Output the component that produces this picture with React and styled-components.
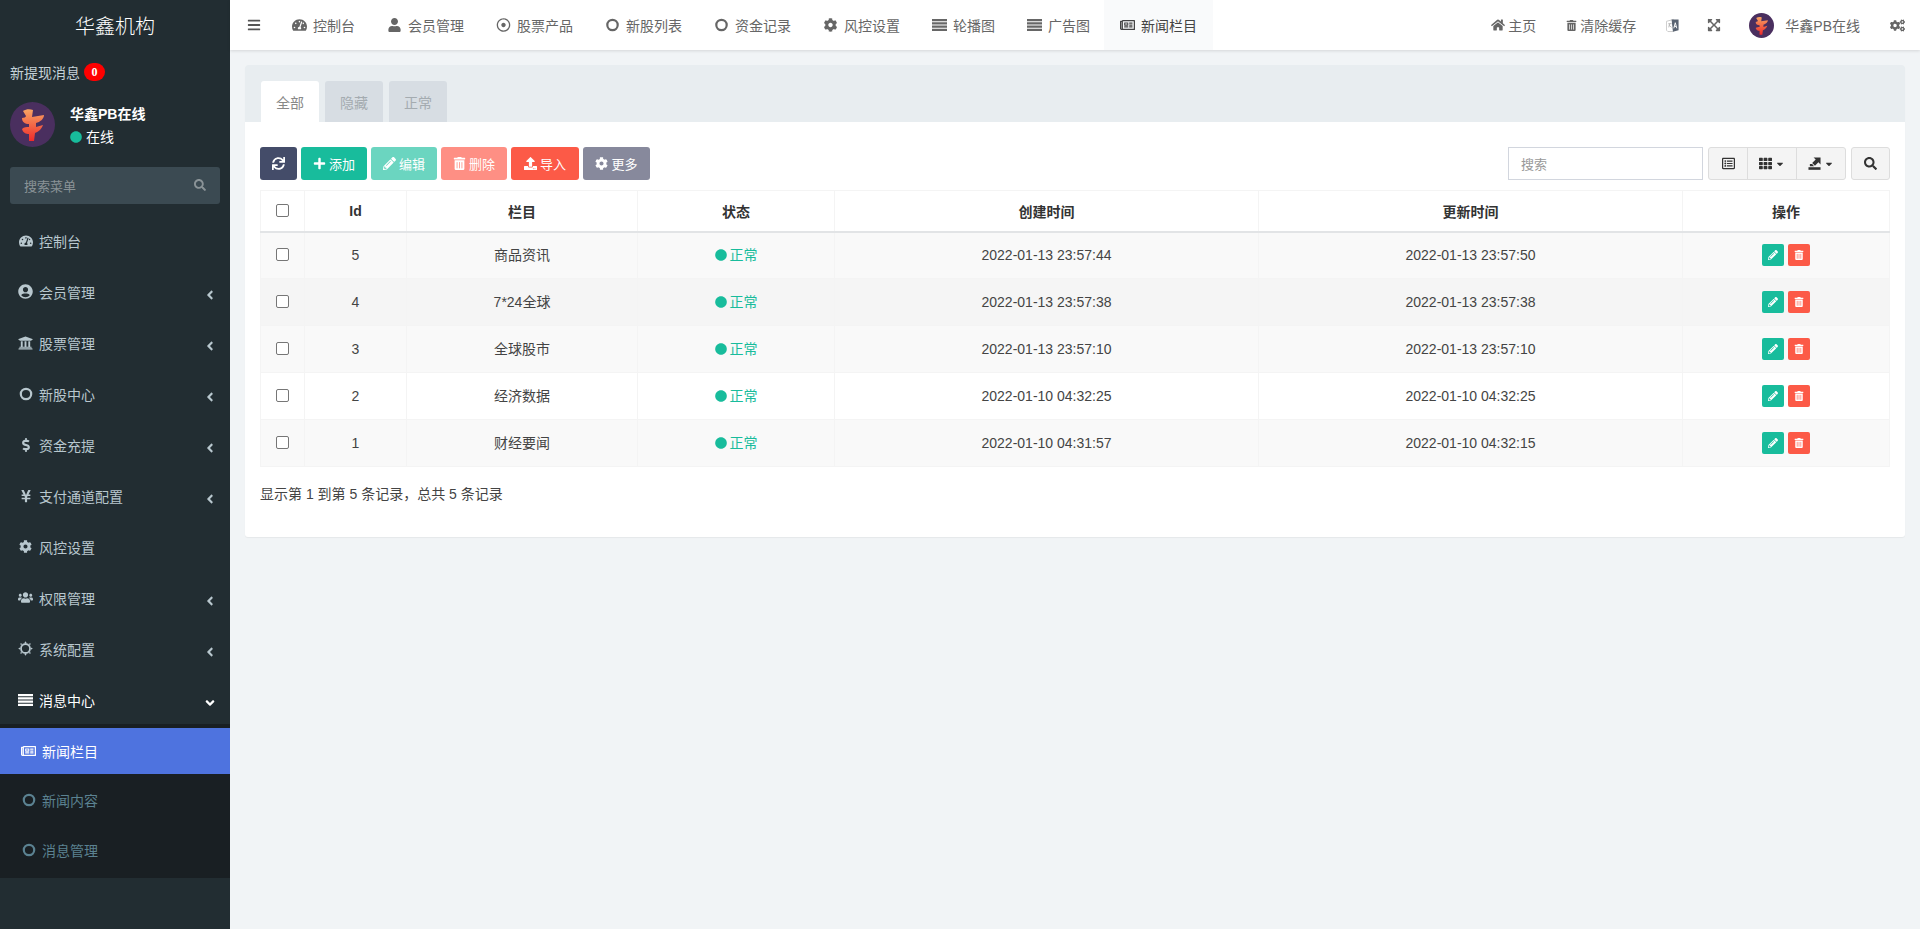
import React from 'react';
import styled, { createGlobalStyle } from 'styled-components';
import {
  FaTachometerAlt, FaUserCircle, FaUniversity, FaDollarSign, FaYenSign, FaCog, FaUsers,
  FaRegNewspaper, FaSearch, FaBars, FaUser, FaRegDotCircle, FaHome, FaTrashAlt, FaExpandArrowsAlt,
  FaCogs, FaPlus, FaPencilAlt, FaUpload, FaSync, FaTh, FaAngleLeft, FaAngleDown, FaCircle, FaRegListAlt, FaCaretDown,
} from 'react-icons/fa';

const Global = createGlobalStyle`
  html, body { margin: 0; padding: 0; height: 100%; }
  body { font-family: "Liberation Sans", "Noto Sans CJK SC", sans-serif; font-size: 14px; color: #333; background: #f1f4f6; }
  * { box-sizing: border-box; }
`;

const Shell = styled.div`display: flex; height: 929px; overflow: hidden;`;
const Side = styled.aside`width: 230px; flex: none; background: #222d32; color: #b8c7ce;`;
const Brand = styled.div`height: 50px; display: flex; align-items: center; justify-content: center; color: #fff; font-size: 20px; font-weight: 300;`;
const Notice = styled.div`height: 24px; margin-top: 10px; padding-left: 10px; display: flex; align-items: center; font-size: 14px; color: #c5d2d8;`;
const Badge = styled.span`margin-left: 4px; width: 21px; height: 18px; border-radius: 9px; background: #f00; color: #fff; font: bold 12px "Liberation Serif", serif; display: flex; align-items: center; justify-content: center;`;
const UserPanel = styled.div`display: flex; padding: 0 10px; margin-top: 18px; height: 45px;`;
const UserInfo = styled.div`margin-left: 15px; color: #fff; display: flex; flex-direction: column; padding-top: 2px;`;
const UserName = styled.div`font-weight: bold; font-size: 14px; line-height: 20px;`;
const UserState = styled.div`margin-top: 3px; font-size: 14px; line-height: 20px; display: flex; align-items: center; gap: 4px; svg { color: #18bc9c; font-size: 12px; }`;
const SearchBox = styled.div`margin: 20px 10px 0; height: 37px; background: #3b4a52; border-radius: 3px; display: flex; align-items: center; justify-content: space-between; padding: 0 14px 1px; color: #8a9397; font-size: 13px;`;
const Menu = styled.nav`margin-top: 11px;`;
const MenuItem = styled.div`
  height: 51px; display: flex; align-items: center; padding: 0 14px 0 18px; font-size: 14px;
  color: ${p => (p.$open ? '#fff' : '#b8c7ce')};
`;
const MenuIcon = styled.span`width: 15px; margin-right: 6px; display: flex; justify-content: center; font-size: ${p => p.$size || 14}px; flex: none;`;
const MenuLabel = styled.span`flex: 1;`;
const MenuArrow = styled.span`display: flex; font-size: 14px; margin-top: 6px; width: 12px; justify-content: center;`;
const SubMenu = styled.div`background: #191f23; padding: 4px 0; margin-top: -1px;`;
const SubItem = styled.div`
  height: ${p => (p.$active ? '46px' : '50px')}; display: flex; align-items: center; padding-left: 21px; font-size: 14px;
  background: ${p => (p.$active ? '#4e73df' : 'transparent')};
  color: ${p => (p.$active ? '#fff' : '#5b8291')};
  padding-top: ${p => (p.$active ? '0' : '2px')};
`;

const Main = styled.div`flex: 1; min-width: 0; display: flex; flex-direction: column;`;
const Top = styled.header`height: 50px; flex: none; background: #fff; box-shadow: 0 1px 3px rgba(0,0,0,.12); display: flex; align-items: stretch; color: #666; font-size: 14px;`;
const Burger = styled.div`width: 46px; display: flex; align-items: center; justify-content: center; font-size: 14px; color: #555; padding-right: 2px; padding-left: 4px;`;
const NavList = styled.div`display: flex; flex: 1;`;
const NavItem = styled.div`
  display: flex; align-items: center; padding: 0 16px; gap: 6px; white-space: nowrap;
  margin-left: ${p => (p.$active ? '-2px' : '0')};
  background: ${p => (p.$active ? '#f9fafb' : 'transparent')};
  color: ${p => (p.$active ? '#444' : '#666')};
  svg { flex: none; width: 15px; height: 14px; }
`;
const NavTools = styled.div`display: flex; align-items: center; padding-right: 15px;`;
const Tool = styled.div`display: flex; align-items: center; gap: 3px; margin-left: ${p => p.$gap || 30}px; svg { font-size: 14px; }`;
const ToolName = styled.span`margin-left: 8px;`;

const Content = styled.main`padding: 15px 15px 0;`;
const Panel = styled.section`background: #fff; border-radius: 3px; box-shadow: 0 1px 1px rgba(0,0,0,.05); height: 472px;`;
const Tabs = styled.div`height: 57px; background: #e8edf0; display: flex; align-items: flex-end; padding-left: 16px; gap: 6px; border-radius: 3px 3px 0 0;`;
const Tab = styled.div`
  width: 58px; height: 41px; display: flex; align-items: center; justify-content: center; font-size: 14px; border-radius: 3px 3px 0 0;
  background: ${p => (p.$active ? '#fff' : '#d7dde3')};
  color: ${p => (p.$active ? '#888' : '#a4abb0')};
`;
const Body = styled.div`padding: 25px 15px 0;`;
const Toolbar = styled.div`display: flex; justify-content: space-between; height: 33px;`;
const ButtonRow = styled.div`display: flex; gap: 4px;`;
const Btn = styled.div`
  width: ${p => p.$w}px; height: 33px; display: flex; align-items: center; justify-content: center; gap: 3px; border-radius: 3px; color: #fff; font-size: 13px;
  background: ${p => p.$bg};
  svg { font-size: 13px; }
`;
const RightTools = styled.div`display: flex;`;
const SearchInput = styled.div`width: 195px; height: 33px; border: 1px solid #d2d6de; padding-left: 12px; display: flex; align-items: center; color: #999; font-size: 13px;`;
const ToolGroup = styled.div`display: flex; margin-left: 5px; border: 1px solid #ddd; border-radius: 3px; background: #f4f4f4; color: #333;`;
const GroupCell = styled.div`
  display: flex; align-items: center; justify-content: center; gap: 3px; width: ${p => p.$w}px; font-size: 13px;
  & + & { border-left: 1px solid #ddd; }
`;
const Caret = styled(FaCaretDown)`font-size: 10px;`;
const SearchBtn = styled.div`margin-left: 5px; width: 39px; height: 33px; border: 1px solid #ddd; border-radius: 3px; background: #f4f4f4; color: #333; display: flex; align-items: center; justify-content: center; font-size: 13px;`;

const Table = styled.table`width: 1630px; margin-top: 10px; border-collapse: collapse; table-layout: fixed; font-size: 14px; border: 1px solid #f4f4f4;`;
const Th = styled.th`height: 41px; border: 1px solid #f4f4f4; border-bottom: 2px solid #e2e4e6; font-weight: bold; color: #333; text-align: center; padding: 0;`;
const Td = styled.td`height: 47px; border: 1px solid #f4f4f4; text-align: center; padding: 0; color: #444; line-height: 18px;`;
const Row = styled.tr`background: ${p => p.$bg};`;
const Check = styled.span`display: inline-block; width: 13px; height: 13px; border: 1px solid #767676; border-radius: 2px; background: #fff; vertical-align: middle; margin-top: -4px;`;
const Status = styled.span`display: inline-flex; align-items: center; gap: 3px; color: #18bc9c; svg { font-size: 12px; }`;
const ActionRow = styled.div`display: flex; justify-content: center; gap: 4px; margin-top: -1px;`;
const MiniBtn = styled.div`width: 22px; height: 22px; border-radius: 2px; display: flex; align-items: center; justify-content: center; color: #fff; font-size: 10px; background: ${p => p.$bg};`;
const Summary = styled.div`margin-top: 18px; line-height: 18px; font-size: 14px; color: #444;`;

const Ring = () => (
  <svg viewBox="0 0 14 14" width="1em" height="1em">
    <circle cx="7" cy="7" r="5.2" fill="none" stroke="currentColor" strokeWidth="2.2" />
  </svg>
);
const SunRing = () => (
  <svg viewBox="0 0 16 16" width="15" height="15">
    <circle cx="8" cy="8" r="4.8" fill="none" stroke="currentColor" strokeWidth="1.9" />
    {[0, 45, 90, 135, 180, 225, 270, 315].map(a => (
      <path key={a} d="M6.8 2.2 L8 0.2 L9.2 2.2 Z" fill="currentColor" transform={`rotate(${a} 8 8)`} />
    ))}
  </svg>
);
const Bars = () => (
  <svg viewBox="0 0 15 12" width="15" height="12">
    <path d="M0 0 H15 V2.2 H0 Z M0 3.3 H15 V5.5 H0 Z M0 6.6 H15 V8.8 H0 Z M0 9.8 H15 V12 H0 Z" fill="currentColor" />
  </svg>
);
const ExportIcon = () => (
  <svg viewBox="0 0 14 14" width="13" height="13">
    <path d="M0.5 11 H13.5 V13.8 H0.5 Z" fill="currentColor" />
    <path d="M6 0.5 H13.5 V8 L11.2 5.7 L7.5 9.5 L4.5 6.5 L8.3 2.8 Z" fill="currentColor" />
    <path d="M2 7.5 H4.5 L6.5 10 H2 Z" fill="currentColor" />
  </svg>
);
const TranslateIcon = () => (
  <svg viewBox="0 0 14 16" width="13" height="15">
    <path d="M0.5 3.5 L8 1.5 V14.5 H2 L0.5 13 Z" fill="#fff" stroke="#c9c9c9" />
    <path d="M2.5 6 H6 M4 6 L3 10 M3 7.5 L6 10" stroke="#b5b5b5" fill="none" />
    <path d="M6 1.5 H13.5 V13 L7.5 14.8 Z" fill="#5a6472" />
    <path d="M8.4 11 L10 5 L11.6 11 M9 9 H11" stroke="#fff" fill="none" />
  </svg>
);

const Logo = ({ size, id }) => (
  <svg width={size} height={size} viewBox="0 0 45 45" style={{ flex: 'none' }}>
    <defs>
      <linearGradient id={id} x1="0" y1="0" x2="0" y2="1">
        <stop offset="0" stopColor="#f6a463" />
        <stop offset="1" stopColor="#ef2a2a" />
      </linearGradient>
    </defs>
    <circle cx="22.5" cy="22.5" r="22.5" fill="#4a2f5f" />
    <path d="M13 9 C16 7 20 7 23 8 L22 15 L34 13 C34 17 30 20 26 21 L26 25 L33 23 C31 28 28 30 25 31 L24 39 L19 39 L19 32 C16 32 13 31 12 27 C14 25 17 25 19 25 L19 22 C15 22 12 20 12 16 C14 16 16 15 16 14 C15 12 14 11 13 9 Z" fill={`url(#${id})`} />
  </svg>
);

const menu = [
  [FaTachometerAlt, '控制台', false, 14],
  [FaUserCircle, '会员管理', true, 15],
  [FaUniversity, '股票管理', true, 16],
  [Ring, '新股中心', true, 14],
  [FaDollarSign, '资金充提', true, 14],
  [FaYenSign, '支付通道配置', true, 14],
  [FaCog, '风控设置', false, 13],
  [FaUsers, '权限管理', true, 17],
  [SunRing, '系统配置', true, 15],
];
const nav = [
  [FaTachometerAlt, '控制台'], [FaUser, '会员管理'], [FaRegDotCircle, '股票产品'], [Ring, '新股列表'],
  [Ring, '资金记录'], [FaCog, '风控设置'], [Bars, '轮播图'], [Bars, '广告图'],
];
const rows = [
  [5, '商品资讯', '2022-01-13 23:57:44', '2022-01-13 23:57:50', '#f9f9f9'],
  [4, '7*24全球', '2022-01-13 23:57:38', '2022-01-13 23:57:38', '#f5f5f5'],
  [3, '全球股市', '2022-01-13 23:57:10', '2022-01-13 23:57:10', '#f9f9f9'],
  [2, '经济数据', '2022-01-10 04:32:25', '2022-01-10 04:32:25', '#ffffff'],
  [1, '财经要闻', '2022-01-10 04:31:57', '2022-01-10 04:32:15', '#f9f9f9'],
];

export default function App() {
  return (
    <Shell>
      <Global />
      <Side>
        <Brand>华鑫机构</Brand>
        <Notice>新提现消息<Badge>0</Badge></Notice>
        <UserPanel>
          <Logo size={45} id="logoA" />
          <UserInfo>
            <UserName>华鑫PB在线</UserName>
            <UserState><FaCircle />在线</UserState>
          </UserInfo>
        </UserPanel>
        <SearchBox>搜索菜单<FaSearch size={12} /></SearchBox>
        <Menu>
          {menu.map(([I, t, arrow, size]) => (
            <MenuItem key={t}>
              <MenuIcon $size={size}><I /></MenuIcon>
              <MenuLabel>{t}</MenuLabel>
              {arrow && <MenuArrow><FaAngleLeft /></MenuArrow>}
            </MenuItem>
          ))}
          <MenuItem $open>
            <MenuIcon><Bars /></MenuIcon>
            <MenuLabel>消息中心</MenuLabel>
            <MenuArrow><FaAngleDown /></MenuArrow>
          </MenuItem>
          <SubMenu>
            <SubItem $active><MenuIcon $size={16}><FaRegNewspaper /></MenuIcon>新闻栏目</SubItem>
            <SubItem><MenuIcon><Ring /></MenuIcon>新闻内容</SubItem>
            <SubItem><MenuIcon><Ring /></MenuIcon>消息管理</SubItem>
          </SubMenu>
        </Menu>
      </Side>
      <Main>
        <Top>
          <Burger><FaBars /></Burger>
          <NavList>
            {nav.map(([I, t]) => <NavItem key={t}><I />{t}</NavItem>)}
            <NavItem $active><FaRegNewspaper />新闻栏目</NavItem>
          </NavList>
          <NavTools>
            <Tool><FaHome />主页</Tool>
            <Tool><FaTrashAlt size={11} />清除缓存</Tool>
            <Tool><TranslateIcon /></Tool>
            <Tool $gap={28}><FaExpandArrowsAlt /></Tool>
            <Tool $gap={28}><Logo size={25} id="logoB" /><ToolName>华鑫PB在线</ToolName></Tool>
            <Tool><FaCogs size={15} /></Tool>
          </NavTools>
        </Top>
        <Content>
          <Panel>
            <Tabs>
              <Tab $active>全部</Tab>
              <Tab>隐藏</Tab>
              <Tab>正常</Tab>
            </Tabs>
            <Body>
              <Toolbar>
                <ButtonRow>
                  <Btn $w={37} $bg="#444c69"><FaSync /></Btn>
                  <Btn $w={66} $bg="#18bc9c"><FaPlus />添加</Btn>
                  <Btn $w={66} $bg="#6bd5c0"><FaPencilAlt />编辑</Btn>
                  <Btn $w={66} $bg="#fe8f84"><FaTrashAlt />删除</Btn>
                  <Btn $w={68} $bg="#fc5a47"><FaUpload />导入</Btn>
                  <Btn $w={67} $bg="#87899c"><FaCog />更多</Btn>
                </ButtonRow>
                <RightTools>
                  <SearchInput>搜索</SearchInput>
                  <ToolGroup>
                    <GroupCell $w={38}><FaRegListAlt /></GroupCell>
                    <GroupCell $w={49}><FaTh /><Caret /></GroupCell>
                    <GroupCell $w={49}><ExportIcon /><Caret /></GroupCell>
                  </ToolGroup>
                  <SearchBtn><FaSearch /></SearchBtn>
                </RightTools>
              </Toolbar>
              <Table>
                <colgroup>
                  <col style={{ width: 44 }} /><col style={{ width: 102 }} /><col style={{ width: 231 }} />
                  <col style={{ width: 197 }} /><col style={{ width: 424 }} /><col style={{ width: 424 }} /><col />
                </colgroup>
                <thead>
                  <tr>
                    <Th><Check /></Th><Th>Id</Th><Th>栏目</Th><Th>状态</Th><Th>创建时间</Th><Th>更新时间</Th><Th>操作</Th>
                  </tr>
                </thead>
                <tbody>
                  {rows.map(([id, name, c, u, bg]) => (
                    <Row key={id} $bg={bg}>
                      <Td><Check /></Td>
                      <Td>{id}</Td>
                      <Td>{name}</Td>
                      <Td><Status><FaCircle />正常</Status></Td>
                      <Td>{c}</Td>
                      <Td>{u}</Td>
                      <Td>
                        <ActionRow>
                          <MiniBtn $bg="#18bc9c"><FaPencilAlt /></MiniBtn>
                          <MiniBtn $bg="#fc5a47"><FaTrashAlt /></MiniBtn>
                        </ActionRow>
                      </Td>
                    </Row>
                  ))}
                </tbody>
              </Table>
              <Summary>显示第 1 到第 5 条记录，总共 5 条记录</Summary>
            </Body>
          </Panel>
        </Content>
      </Main>
    </Shell>
  );
}
